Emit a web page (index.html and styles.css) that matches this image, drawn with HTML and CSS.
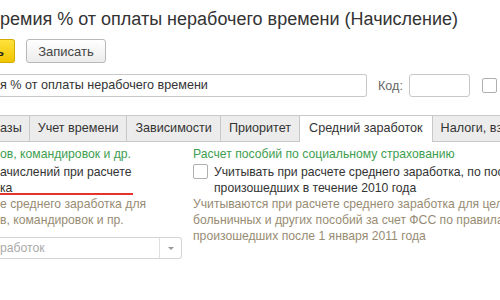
FILE: index.html
```html
<!DOCTYPE html>
<html lang="ru">
<head>
    <meta charset="UTF-8">
    <meta name="viewport" content="width=device-width, initial-scale=1.0">
    <title>Премия % от оплаты нерабочего времени (Начисление)</title>
    <link rel="stylesheet" href="styles.css">
</head>
<body>
    <div class="page">
        <h1 class="title">ремия % от оплаты нерабочего времени (Начисление)</h1>

        <div class="toolbar">
            <button class="btn btn-main">ь</button>
            <button class="btn">Записать</button>
        </div>

        <div class="name-row">
            <div class="field field-name">я % от оплаты нерабочего времени</div>
            <span class="field-label">Код:</span>
            <div class="field field-code"></div>
            <span class="checkbox"></span>
        </div>

        <div class="tabs">
            <div class="tab tab-first">азы</div>
            <div class="tab">Учет времени</div>
            <div class="tab">Зависимости</div>
            <div class="tab">Приоритет</div>
            <div class="tab active">Средний заработок</div>
            <div class="tab">Налоги, взносы, бухучет</div>
        </div>

        <div class="panel">
            <div class="col">
                <div class="group-title">ов, командировок и др.</div>
                <div class="check-label marked">ачислений при расчете<br>ка</div>
                <div class="hint">е среднего заработка для<br>в, командировок и пр.</div>
                <div class="combo">
                    <span class="combo-text">работок</span>
                    <span class="combo-btn"><span class="arrow"></span></span>
                </div>
            </div>
            <div class="col">
                <div class="group-title">Расчет пособий по социальному страхованию</div>
                <div class="check-row">
                    <span class="checkbox"></span>
                    <div class="check-label">Учитывать при расчете среднего заработка, по пособиям,<br>произошедших в течение 2010 года</div>
                </div>
                <div class="hint">Учитываются при расчете среднего заработка для целей<br>больничных и других пособий за счет ФСС по правилам<br>произошедших после 1 января 2011 года</div>
            </div>
        </div>
    </div>
</body>
</html>
```

FILE: styles.css
```css
body {
    margin: 0;
    background-color: #fff;
    font-family: 'Liberation Sans', Arial, sans-serif;
    font-size: 12.2px;
    color: #333;
    overflow: hidden;
}

.page {
    width: 500px;
    height: 300px;
    overflow: hidden;
    white-space: nowrap;
}

.title {
    margin: 0;
    padding-top: 8px;
    font-size: 18px;
    font-weight: normal;
    line-height: 22px;
    color: #333;
}

.toolbar {
    display: flex;
    gap: 11px;
    margin-top: 9px;
}

.btn {
    height: 24px;
    padding: 0;
    width: 80px;
    border: 1px solid #b8b8b8;
    border-radius: 3px;
    background: linear-gradient(#ffffff, #ececec);
    font-family: inherit;
    font-size: 13px;
    color: #444;
    box-sizing: border-box;
}

.btn-main {
    width: 15px;
    overflow: hidden;
    border-left: none;
    border-color: #d2ac00;
    border-radius: 0 3px 3px 0;
    background: linear-gradient(#ffe23d, #f2c500);
    color: #222;
    text-align: left;
    text-indent: -4px;
    font-weight: bold;
}

.name-row {
    display: flex;
    align-items: center;
    margin-top: 11px;
    height: 23px;
}

.field {
    height: 23px;
    border: 1px solid #c8c8c8;
    border-radius: 3px;
    box-sizing: border-box;
    line-height: 21px;
    font-size: 12.6px;
}

.field-name {
    width: 367px;
    border-left: none;
    border-radius: 0 3px 3px 0;
}

.field-label {
    margin-left: 11px;
    font-size: 12.6px;
    color: #666;
}

.field-code {
    width: 61px;
    margin-left: 6px;
}

.checkbox {
    display: inline-block;
    flex: none;
    width: 15px;
    height: 15px;
    border: 1px solid #b0b0b0;
    border-radius: 2px;
    box-sizing: border-box;
    background-color: #fff;
}

.name-row .checkbox {
    margin-left: 12px;
}

.tabs {
    display: flex;
    height: 26px;
    margin-top: 18px;
    border-bottom: 1px solid #c8c8c8;
}

.tab {
    flex: none;
    padding: 0 8px;
    margin-right: -1px;
    border: 1px solid #c8c8c8;
    border-bottom: none;
    background-color: #ececec;
    line-height: 25px;
    font-size: 12.6px;
    color: #333;
}

.tab-first {
    padding: 0 7px 0 0;
    border-left: none;
}

.tab.active {
    height: 26px;
    margin-bottom: -1px;
    padding: 0 9px;
    background-color: #fff;
}

.panel {
    display: grid;
    grid-template-columns: 181px auto;
    column-gap: 12px;
    margin-top: 4px;
    line-height: 16px;
}

.group-title {
    color: #3d9e4f;
}

.check-label {
    margin-top: 2px;
}

.marked {
    position: relative;
}

.marked::after {
    content: "";
    position: absolute;
    left: 0;
    top: 29px;
    width: 133px;
    height: 2px;
    background-color: #e5322d;
}

.check-row {
    display: flex;
    gap: 6px;
}

.check-row .checkbox {
    margin-top: 2px;
}

.hint {
    color: #978c73;
}

.combo {
    display: flex;
    width: 182px;
    height: 22px;
    margin-top: 9px;
    border: 1px solid #d4d4d4;
    border-left: none;
    border-radius: 0 3px 3px 0;
    box-sizing: border-box;
}

.combo-text {
    flex: 1;
    line-height: 20px;
    color: #aaa;
}

.combo-btn {
    display: flex;
    align-items: center;
    justify-content: center;
    width: 21px;
    border-left: 1px solid #e0e0e0;
}

.arrow {
    width: 0;
    height: 0;
    border-left: 3px solid transparent;
    border-right: 3px solid transparent;
    border-top: 3px solid #999;
}
```
